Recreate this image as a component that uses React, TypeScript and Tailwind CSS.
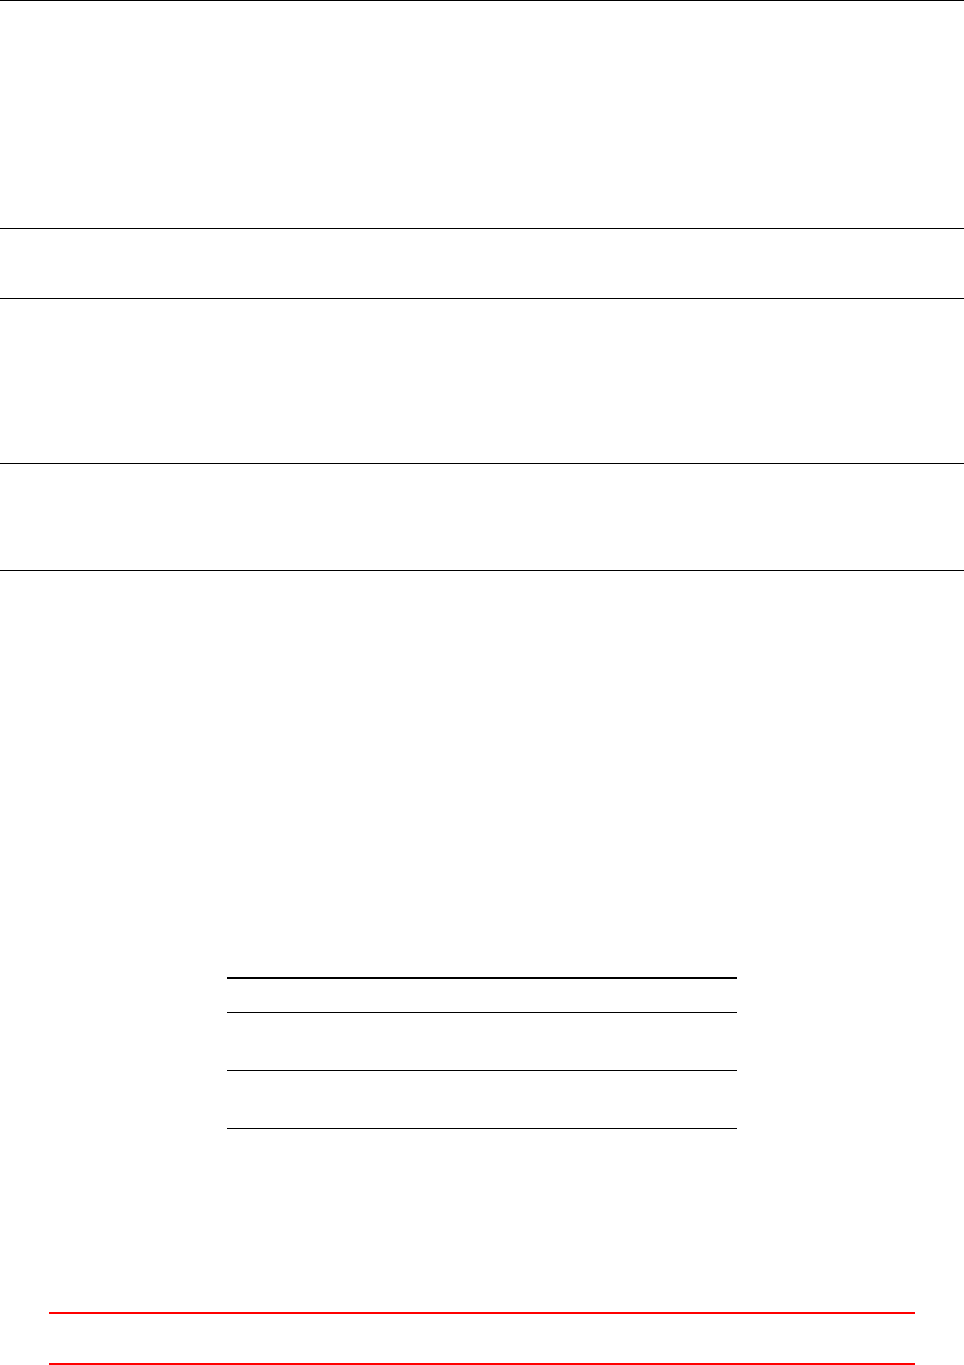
export default function App() {
  return (
    <div className="min-h-[1365px] bg-white font-['Liberation_Sans',sans-serif]">
      <div className="h-[228px] border-t border-black" />
      <div className="h-[70px] border-t border-black" />
      <div className="h-[165px] border-t border-black" />
      <div className="h-[108px] border-t border-b border-black" />
      <div className="h-[406px]" />
      <div className="mx-auto w-[510px]">
        <div className="h-[35px] border-t-2 border-black" />
        <div className="h-[58px] border-t border-black" />
        <div className="h-[58px] border-t border-black" />
        <div className="border-t border-black" />
      </div>
      <div className="h-[183px]" />
      <div className="mx-auto w-[866px]">
        <div className="h-[51px] border-t-2 border-[#ff0000]" />
        <div className="border-t-2 border-[#ff0000]" />
      </div>
    </div>
  );
}
